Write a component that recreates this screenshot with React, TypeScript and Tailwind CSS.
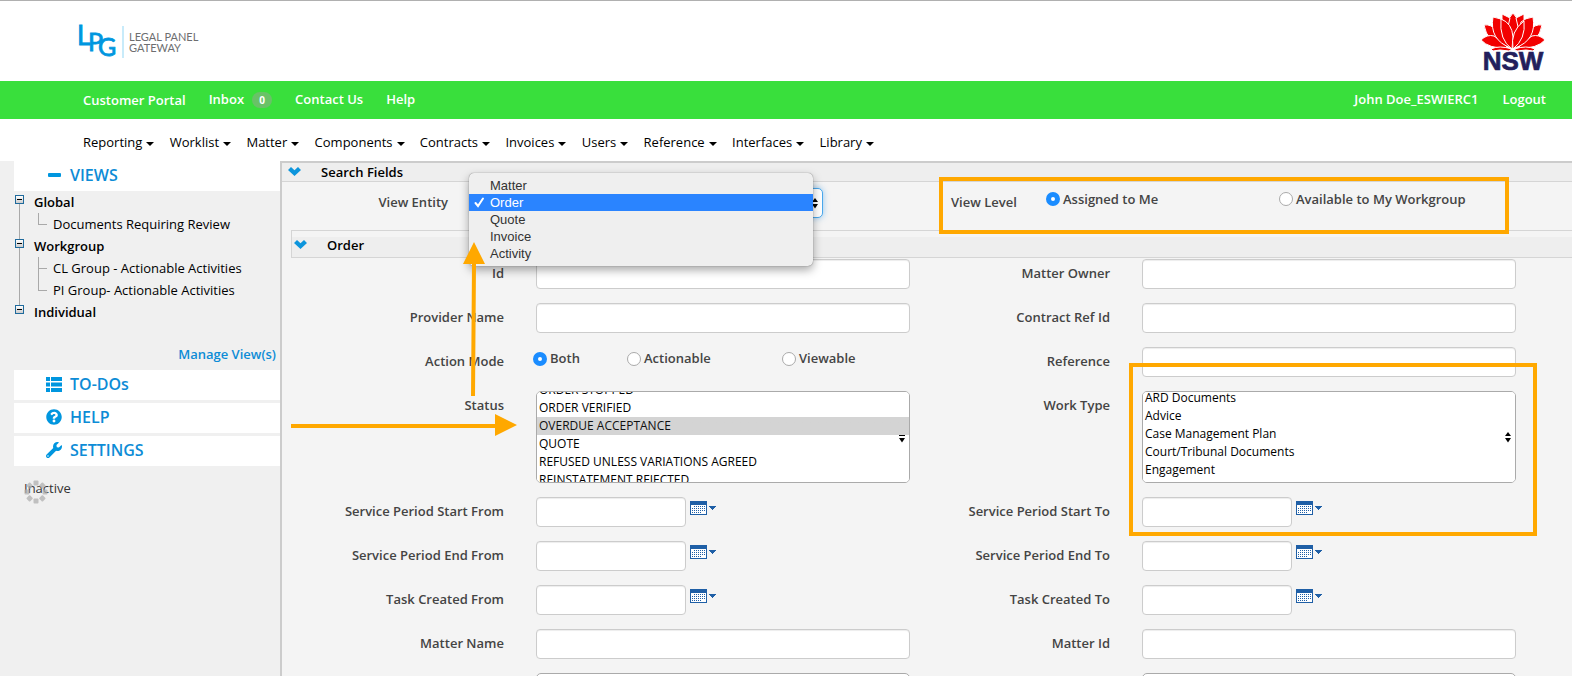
import React, { useEffect, useRef } from "react";
import { FaQuestionCircle, FaWrench } from "react-icons/fa";

const menus = [
  "Reporting",
  "Worklist",
  "Matter",
  "Components",
  "Contracts",
  "Invoices",
  "Users",
  "Reference",
  "Interfaces",
  "Library",
];

const views = [
  { name: "Global", items: ["Documents Requiring Review"] },
  {
    name: "Workgroup",
    items: ["CL Group - Actionable Activities", "PI Group- Actionable Activities"],
  },
  { name: "Individual", items: [] },
];

const entities = ["Matter", "Order", "Quote", "Invoice", "Activity"];

const statuses = [
  "ORDER STOPPED",
  "ORDER VERIFIED",
  "OVERDUE ACCEPTANCE",
  "QUOTE",
  "REFUSED UNLESS VARIATIONS AGREED",
  "REINSTATEMENT REJECTED",
];

const workTypes = [
  "ARD Documents",
  "Advice",
  "Case Management Plan",
  "Court/Tribunal Documents",
  "Engagement",
  "",
];

const LpgLogo: React.FC = () => (
  <a href="#" className="flex items-center text-[#6d6e70]" aria-label="Legal Panel Gateway">
    <svg width="40" height="34" viewBox="0 0 40 34" className="overflow-visible" aria-hidden="true">
      <g fill="#0096df" stroke="#0096df" strokeWidth="0.8" fontFamily="Lato, sans-serif">
        <text x="-2" y="20" fontSize="26">L</text>
        <text x="9" y="26" fontSize="25">P</text>
        <text x="19" y="31" fontSize="25">G</text>
      </g>
    </svg>
    <span className="ml-[3px] h-8 w-0.5 bg-[#c8ebfa]" />
    <span className="ml-[5px] font-['Lato',sans-serif] text-[11px] leading-[11px]">
      LEGAL PANEL
      <br />
      GATEWAY
    </span>
  </a>
);

const NswLogo: React.FC = () => (
  <svg
    width="64"
    height="60"
    viewBox="0 0 64 60"
    className="overflow-visible"
    role="img"
    aria-label="NSW Government"
  >
    <g fill="#f20000" stroke="#fff" strokeWidth="1" strokeLinejoin="round">
      <path d="M32 0 Q38 6 39 14 L32 26 L25 14 Q26 6 32 0Z" />
      <path d="M21 1 L29 5 L26 18 L21 14Z" />
      <path d="M43 1 L35 5 L38 18 L43 14Z" />
      <path d="M3 12 Q10 11 15 17 L24 32 Q6 30 3 12Z" />
      <path d="M61 12 Q54 11 49 17 L40 32 Q58 30 61 12Z" />
      <path d="M0 27 Q6 21 13 23 Q20 27 27 35 Q8 36 0 27Z" />
      <path d="M64 27 Q58 21 51 23 Q44 27 37 35 Q56 36 64 27Z" />
      <path d="M12 4 Q20 5 24 9 L30 35 Q8 27 12 4Z" />
      <path d="M52 4 Q44 5 40 9 L34 35 Q56 27 52 4Z" />
      <path d="M20 6 Q31 10 32 24 L31 36 Q18 27 20 6Z" />
      <path d="M43 8 Q45 26 32 36 Q29 18 43 8Z" />
      <path d="M10 36 Q18 32 31 36 L28 38 Q18 36 12 38Z" />
      <path d="M54 36 Q46 32 33 36 L36 38 Q46 36 52 38Z" />
    </g>
    <text
      x="32"
      y="57"
      textAnchor="middle"
      fontSize="26"
      fontWeight="700"
      fontFamily="Liberation Sans, Arial, sans-serif"
      fill="#241f5c"
      stroke="#241f5c"
      strokeWidth="0.7"
    >
      NSW
    </text>
  </svg>
);

const MinusIcon: React.FC = () => (
  <svg width="13" height="4" viewBox="0 0 13 4" aria-hidden="true">
    <rect width="13" height="4" rx="1" fill="currentColor" />
  </svg>
);

const ListIcon: React.FC = () => (
  <svg width="16" height="15" viewBox="0 0 16 15" fill="currentColor" aria-hidden="true">
    <path d="M0 0h4v4H0zM5 0h11v4H5zM0 5.500h4v4H0zM5 5.500h11v4H5zM0 11h4v4H0zM5 11h11v4H5z" />
  </svg>
);

const ChevronIcon: React.FC = () => (
  <svg width="13" height="9" viewBox="0 0 13 9" aria-hidden="true">
    <path d="M0 3 L3 0 L6.5 3.2 L10 0 L13 3 L6.5 9Z" fill="#0d95dc" />
  </svg>
);

const SortArrows: React.FC<{ half?: boolean }> = ({ half }) => (
  <svg width="6" height="11" viewBox="0 0 6 11" aria-hidden="true">
    {half ? <path d="M0 3h6v1H0z" /> : <path d="M0 4 L3 0 L6 4Z" />}
    <path d="M0 6 H6 L3 10.5Z" />
  </svg>
);

const CalendarButton: React.FC<{ label: string }> = ({ label }) => (
  <button type="button" aria-label={`Pick ${label}`} className="mt-1 ml-1 flex items-start">
    <svg width="27" height="14" viewBox="0 0 27 14" shapeRendering="crispEdges">
      <path d="M0 0h17v14H0z" fill="#1f5fa6" />
      <path d="M1 4h15v9H1z" fill="#fff" />
      <path
        d="M4 5.5h12M2 7.5h14M2 9.5h14M2 11.5h10"
        stroke="#1f5fa6"
        strokeDasharray="1 1"
      />
      <path d="M19 5h7L22.500 9Z" fill="#1f5fa6" />
    </svg>
  </button>
);

const Field: React.FC<{ label: string; id: string; children: React.ReactNode }> = ({
  label,
  id,
  children,
}) => (
  <div className="grid grid-cols-[200fr_374fr] gap-x-8">
    <label htmlFor={id} className="pt-1 text-right font-semibold leading-5">
      {label}
    </label>
    <div className="flex min-h-[30px] min-w-0 items-start">{children}</div>
  </div>
);

const inputStyle =
  "h-[30px] rounded border border-[#ccc] bg-white px-2 shadow-[inset_0_1px_1px_rgba(0,0,0,0.075)]";

const TextField: React.FC<{ label: string; id: string }> = ({ label, id }) => (
  <Field label={label} id={id}>
    <input id={id} type="text" className={`${inputStyle} w-full`} />
  </Field>
);

const DateField: React.FC<{ label: string; id: string }> = ({ label, id }) => (
  <Field label={label} id={id}>
    <input id={id} type="text" className={`${inputStyle} w-[150px]`} />
    <CalendarButton label={label} />
  </Field>
);

interface ListFieldProps {
  label: string;
  id: string;
  options: string[];
  selected?: string[];
  offset?: number;
  half?: boolean;
}

const ListField: React.FC<ListFieldProps> = ({ label, id, options, selected, offset = 0, half }) => {
  const ref = useRef<HTMLSelectElement>(null);

  useEffect(() => {
    if (ref.current) ref.current.scrollTop = offset;
  }, [offset]);

  return (
    <Field label={label} id={id}>
      <div className="relative w-full">
        <select
          ref={ref}
          id={id}
          multiple
          defaultValue={selected ?? []}
          className="block h-[92px] w-full overflow-y-scroll rounded-[5px] border border-[#aaa] bg-white text-xs text-black [scrollbar-width:none]"
        >
          {options.map((option, index) => (
            <option
              key={index}
              value={option}
              className="h-[18px] min-h-0 px-0.5 py-0 leading-[18px] checked:bg-[#d4d4d4] checked:bg-linear-to-r checked:from-[#d4d4d4] checked:to-[#d4d4d4]"
            >
              {option}
            </option>
          ))}
        </select>
        <span className="pointer-events-none absolute top-[41px] right-[5px]">
          <SortArrows half={half} />
        </span>
      </div>
    </Field>
  );
};

const Radio: React.FC<{ name: string; label: string; checked?: boolean; className?: string }> = ({
  name,
  label,
  checked,
  className,
}) => (
  <label className={`flex items-center gap-[3px] font-semibold whitespace-nowrap ${className ?? ""}`}>
    <input
      type="radio"
      name={name}
      defaultChecked={checked}
      className="h-3.5 w-3.5 appearance-none rounded-full border border-[#aaa] bg-white checked:border-5 checked:border-[#1a8cff]"
    />
    {label}
  </label>
);

const PanelLink: React.FC<{ icon: React.ReactNode; label: string }> = ({ icon, label }) => (
  <button
    type="button"
    className="flex h-[30px] w-full items-center gap-2 bg-white pb-0.5 pl-8 text-left text-base font-semibold text-[#0d8cd6]"
  >
    <span className="flex w-4 justify-center text-[#0096df]">{icon}</span>
    {label}
  </button>
);

const Sidebar: React.FC = () => (
  <aside className="w-[282px] shrink-0 border-r-2 border-[#ccc] bg-[#f0f0f0] pl-3.5">
    <PanelLink icon={<MinusIcon />} label="VIEWS" />

    {/* Tree of saved views */}
    <ul className="relative leading-[22px] text-black">
      <li className="absolute top-3 left-[5px] h-[108px] w-px bg-[#a9a9a9]" aria-hidden="true" />
      {views.map((view) => (
        <li key={view.name} className="relative">
          <button type="button" className="flex h-[22px] items-center font-semibold">
            <span className="mr-[10px] mb-[5px] ml-px flex h-[9px] w-[9px] items-center justify-center border border-[#1f6a9c] bg-linear-to-b from-white to-[#ccc]">
              <span className="h-px w-[5px] bg-black" />
            </span>
            {view.name}
          </button>
          <ul>
            {view.items.map((item) => (
              <li key={item} className="group flex h-[22px] pl-6">
                <span className="relative w-[15px] border-l border-[#a9a9a9] group-last:h-3">
                  <span className="absolute top-[11px] left-0 h-px w-2 bg-[#a9a9a9]" />
                </span>
                <a href="#">{item}</a>
              </li>
            ))}
          </ul>
        </li>
      ))}
    </ul>

    <div className="mt-[21px] mr-1 mb-[5px] text-right leading-[21px] font-semibold">
      <a href="#" className="text-[#0d8cd6]">
        Manage View(s)
      </a>
    </div>

    <div className="flex flex-col gap-[3px]">
      <PanelLink icon={<ListIcon />} label="TO-DOs" />
      <PanelLink icon={<FaQuestionCircle size={16} />} label="HELP" />
      <PanelLink icon={<FaWrench size={16} />} label="SETTINGS" />
    </div>

    <div className="relative mt-3 pl-2.5 leading-5">
      Inactive
      <svg
        width="24"
        height="24"
        viewBox="-12 -12 24 24"
        className="absolute top-0.5 left-2.5 opacity-75"
        aria-hidden="true"
      >
        {[0, 45, 90, 135, 180, 225, 270, 315].map((angle) => (
          <rect
            key={angle}
            x="-2.5"
            y="-11.500"
            width="5"
            height="5"
            rx="1"
            fill="#b0b0b0"
            transform={`rotate(${angle})`}
          />
        ))}
      </svg>
    </div>
  </aside>
);

const EntityMenu: React.FC = () => (
  <ul
    role="listbox"
    aria-label="View Entity options"
    className="absolute -top-[15px] -left-1 z-10 w-[344px] rounded-[5px] bg-[#efefef] py-1 font-['Liberation_Sans',Arial,sans-serif] text-[13px] leading-[17px] text-[#333] shadow-[0_0_1px_rgba(0,0,0,0.6),0_4px_10px_rgba(0,0,0,0.35)]"
  >
    {entities.map((entity) => (
      <li
        key={entity}
        role="option"
        aria-selected={entity === "Order"}
        className="flex pl-[5px] aria-selected:bg-[#2a84ff] aria-selected:text-white"
      >
        <span className="flex w-4 items-center">
          {entity === "Order" && (
            <svg width="11" height="11" viewBox="0 0 11 11" aria-hidden="true">
              <path d="M1.500 6 L4 9 L9 1.500" fill="none" stroke="#fff" strokeWidth="2" strokeLinecap="round" />
            </svg>
          )}
        </span>
        {entity}
      </li>
    ))}
  </ul>
);

const SearchPanel: React.FC = () => (
  <main className="relative min-w-0 flex-1 border-t-2 border-[#ccc] bg-[#f4f4f4] text-[#444]">
    <h2 className="flex h-[19px] items-start border-b border-[#d5d5d5] bg-[#eee] pt-px pl-1.5 font-semibold text-black">
      <span className="pt-[3px]">
        <ChevronIcon />
      </span>
      <span className="ml-5 leading-4">Search Fields</span>
    </h2>

    <div className="flex h-12 items-start pt-1.5">
      <label htmlFor="entity" className="w-[166px] pt-1 text-right leading-5 font-semibold">
        View Entity
      </label>
      <div className="relative ml-[25px] w-[350px]">
        <select
          id="entity"
          defaultValue="Order"
          className="block h-[30px] w-full appearance-none rounded-[5px] border border-[#4aa8ec] bg-white px-4 shadow-[0_0_6px_rgba(82,168,236,0.6)]"
        >
          {entities.map((entity) => (
            <option key={entity}>{entity}</option>
          ))}
        </select>
        <span className="pointer-events-none absolute top-[10px] right-[5px]">
          <SortArrows />
        </span>
        <EntityMenu />
      </div>
      <fieldset className="ml-32 flex leading-5" aria-label="View Level">
        <span className="w-[95px] pt-1 font-semibold">View Level</span>
        <Radio name="level" label="Assigned to Me" checked className="h-[22px] w-[233px]" />
        <Radio name="level" label="Available to My Workgroup" className="h-[22px]" />
      </fieldset>
    </div>

    {/* Order criteria */}
    <section className="pl-[9px]">
      <h2 className="h-7 border border-r-0 border-[#d5d5d5] pt-1.5 text-black">
        <span className="flex h-5 items-start bg-[#eee] pl-0.5 font-semibold">
          <span className="pt-[3px]">
            <ChevronIcon />
          </span>
          <span className="ml-5 leading-4">Order</span>
        </span>
      </h2>
      <div className="mt-px grid grid-cols-2 gap-y-3.5 pr-14 pl-[13px]">
        <TextField label="Id" id="id" />
        <TextField label="Matter Owner" id="owner" />
        <TextField label="Provider Name" id="provider" />
        <TextField label="Contract Ref Id" id="contract" />
        <Field label="Action Mode" id="mode">
          <div id="mode" role="radiogroup" className="-ml-[3px] flex h-[23px] items-center">
            <Radio name="mode" label="Both" checked className="w-[94px]" />
            <Radio name="mode" label="Actionable" className="w-[155px]" />
            <Radio name="mode" label="Viewable" />
          </div>
        </Field>
        <TextField label="Reference" id="reference" />
        <ListField
          label="Status"
          id="status"
          options={statuses}
          selected={["OVERDUE ACCEPTANCE"]}
          offset={11}
          half
        />
        <ListField label="Work Type" id="work-type" options={workTypes} offset={3} />
        <DateField label="Service Period Start From" id="start-from" />
        <DateField label="Service Period Start To" id="start-to" />
        <DateField label="Service Period End From" id="end-from" />
        <DateField label="Service Period End To" id="end-to" />
        <DateField label="Task Created From" id="created-from" />
        <DateField label="Task Created To" id="created-to" />
        <TextField label="Matter Name" id="matter-name" />
        <TextField label="Matter Id" id="matter-id" />
        <ListField label="" id="extra-left" options={[]} />
        <ListField label="" id="extra-right" options={[]} />
      </div>
    </section>

    {/* Callouts drawn over the form */}
    <div className="pointer-events-none absolute top-3.5 left-[657px] z-20 h-[57px] w-[570px] border-4 border-[#ffa800]" />
    <div className="pointer-events-none absolute top-[200px] left-[847px] z-20 h-[173px] w-[408px] border-4 border-[#ffa800]" />
    <svg
      width="240"
      height="200"
      viewBox="0 0 240 200"
      className="pointer-events-none absolute top-[78px] left-2 z-20"
      aria-hidden="true"
    >
      <g fill="#ffa800">
        <path d="M184 1 L195 23 H186 L185 155 H181 L182 23 H173Z" />
        <path d="M1 183 H205 V173 L227 184 L205 195 V187 H1Z" />
      </g>
    </svg>
  </main>
);

export default function App() {
  return (
    <div className="flex h-screen flex-col overflow-hidden bg-white font-['Open_Sans',sans-serif] text-[13px] text-[#333]">
      <header className="flex h-[81px] shrink-0 items-start justify-between border-t border-[#b0b0b0] pr-[27px] pl-[79px]">
        <div className="pt-6">
          <LpgLogo />
        </div>
        <div className="pt-3">
          <NswLogo />
        </div>
      </header>

      <nav className="flex h-[38px] shrink-0 items-center bg-[#39df3c] pr-[26px] pl-[83px] font-semibold text-white">
        <a href="#" className="pt-0.5">Customer Portal</a>
        <a href="#" className="ml-[23px] flex items-center">
          Inbox
          <span className="ml-2 flex h-4 w-5 items-center justify-center rounded-full bg-[#69c267] text-[10px] font-bold">
            0
          </span>
        </a>
        <a href="#" className="ml-[23px]">Contact Us</a>
        <a href="#" className="ml-[23px]">Help</a>
        <a href="#" className="ml-auto">John Doe_ESWIERC1</a>
        <a href="#" className="ml-6">Logout</a>
      </nav>

      <nav className="ml-[83px] flex h-[42px] max-w-[791px] shrink-0 items-center justify-between pt-1.5 text-black">
        {menus.map((menu) => (
          <button key={menu} type="button" className="flex items-center gap-1">
            {menu}
            <svg width="8" height="4" viewBox="0 0 8 4" className="mt-0.5" aria-hidden="true">
              <path d="M0 0h8L4 4Z" />
            </svg>
          </button>
        ))}
      </nav>

      <div className="flex min-h-0 flex-1 bg-[#f0f0f0]">
        <Sidebar />
        <SearchPanel />
      </div>
    </div>
  );
}
